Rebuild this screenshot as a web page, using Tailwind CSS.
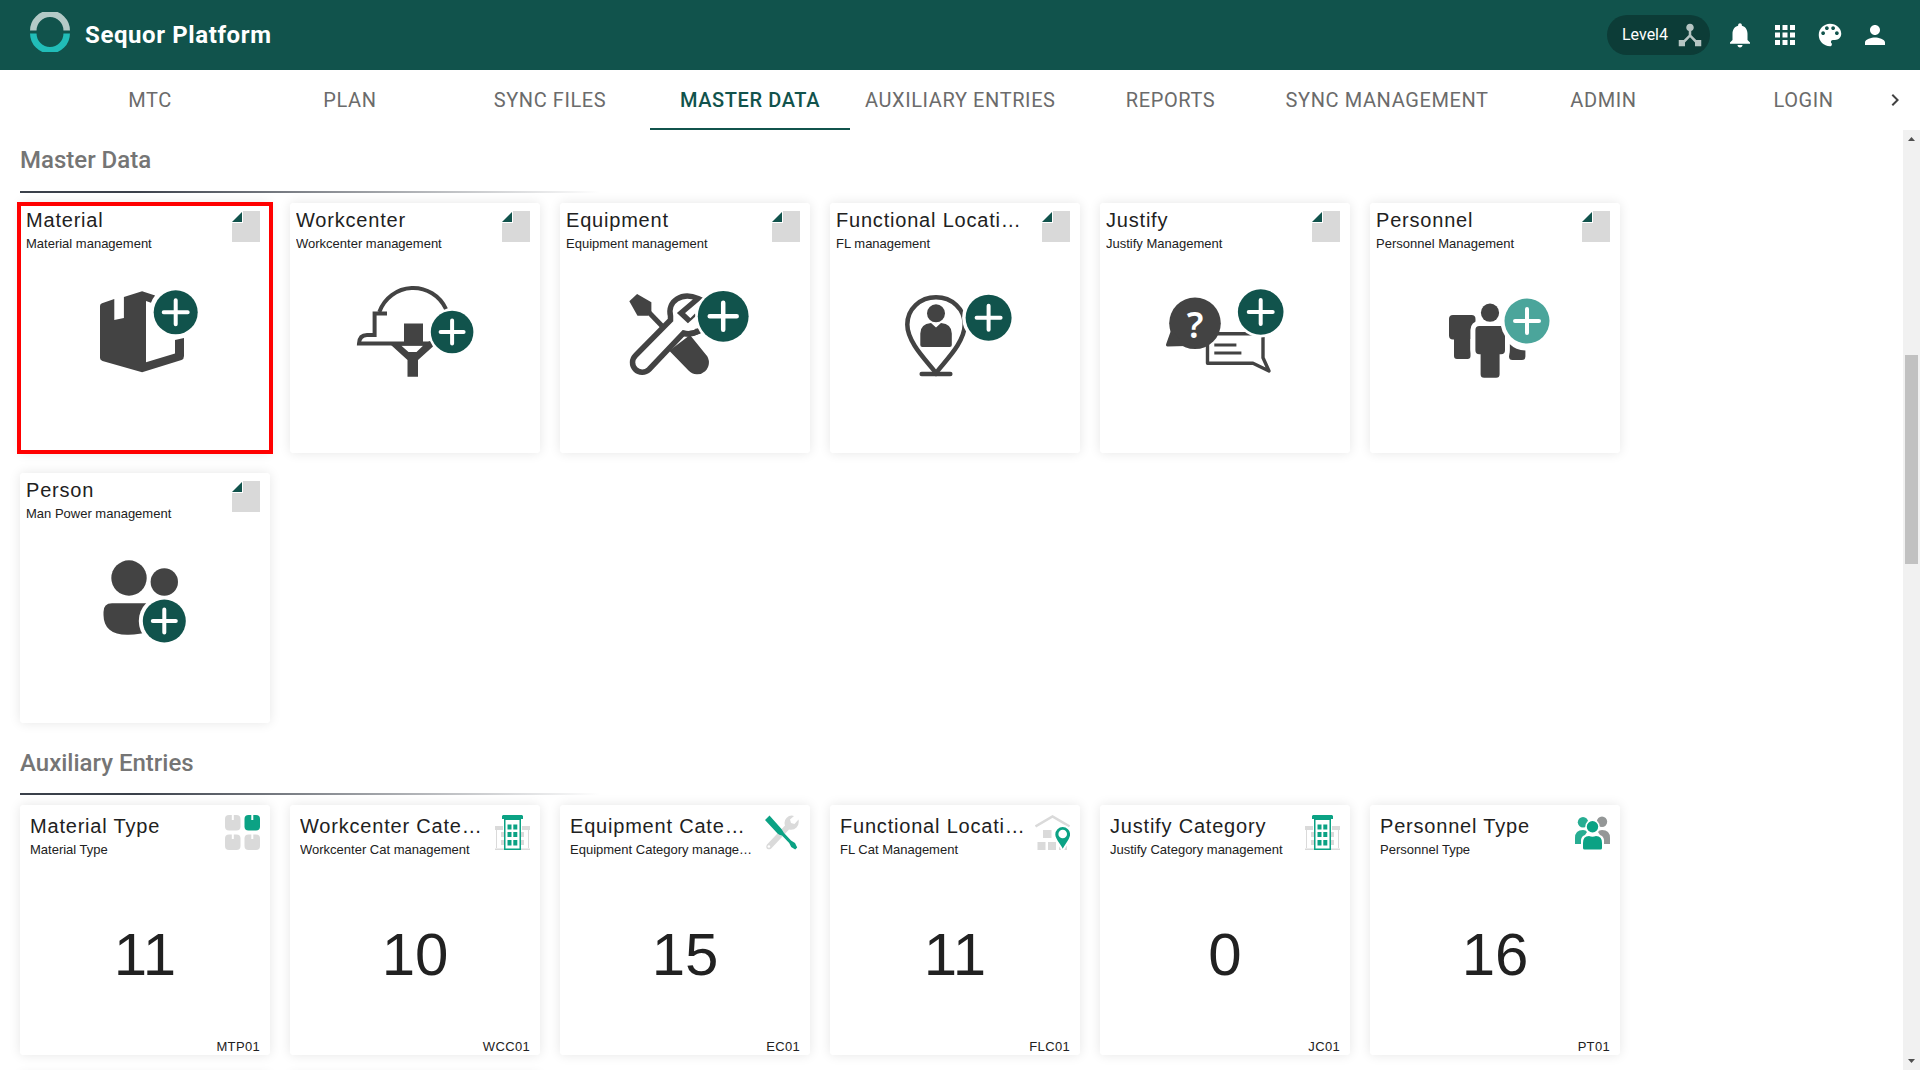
<!DOCTYPE html>
<html lang="en">
<head>
  <meta charset="UTF-8" />
  <meta name="viewport" content="width=device-width, initial-scale=1.0"/>
  <title>Sequor Platform</title>
  <script src="https://cdn.jsdelivr.net/npm/@tailwindcss/browser@4"></script>
</head>
<body class="h-screen flex flex-col overflow-hidden bg-white pb-[10px] font-['Liberation_Sans',Arial,sans-serif] text-[#212121]">

  <!-- Shared icons -->
  <svg class="hidden" aria-hidden="true">
    <symbol id="icon-doc" viewBox="0 0 28 31">
      <path fill="#d9d9d9" d="M11 0h17v31H0V12h11z"/>
      <path fill="#11534c" d="M10 1v10H0z"/>
    </symbol>
    <symbol id="icon-building" viewBox="0 0 35 35">
      <path fill="#dadada" d="M0 11h8v4H0zM27 11h8v4h-8zM1 15h1v18H1zM33 15h1v18h-1zM0 33.500h35V35H0zM6 17h4v5H6zM6 25h4v5H6zM25 17h4v5h-4zM25 25h4v5h-4z"/>
      <path fill="#fff" d="M10 4h16v31H10z"/>
      <path fill="#0ba284" fill-rule="evenodd" d="M8 0h19l1 1v3H7V1zM9 4h17v31H9zM10.500 5v28.500h14V5z"/>
      <path fill="#0ba284" d="M12.500 9.500h4v5h-4zM18.300 9.500h4v5h-4zM12.500 17h4v5h-4zM18.300 17h4v5h-4zM12.500 25h4v5.500h-4zM18.300 25h4v5.500h-4z"/>
    </symbol>
  </svg>

  <header class="flex h-[70px] shrink-0 items-center justify-between bg-[#11534c] px-[30px] font-[Roboto,sans-serif] text-white">
    <a href="#" class="flex items-center gap-[15px]">
      <svg class="mb-[6px] size-10" viewBox="0 0 40 40" fill="none" stroke-width="6.500" aria-hidden="true">
        <path stroke="#b4cac7" d="M3.300 18.500a16.700 16.700 0 0 1 33.400 0"/>
        <path stroke="#21bdb8" d="M3.300 21.500a16.700 16.700 0 0 0 33.400 0"/>
      </svg>
      <span class="text-2xl font-bold tracking-wide">Sequor Platform</span>
    </a>
    <div class="flex items-center gap-[15px]">
      <button type="button" class="flex h-10 items-center gap-[7px] rounded-full bg-[#0c3c37] pr-[5px] pl-[15px] text-base">
        Level4
        <svg class="size-[30px]" viewBox="0 0 24 24" fill="#b6c5c3" aria-hidden="true"><path d="M17 16l-4-4V8.820C14.160 8.400 15 7.300 15 6c0-1.660-1.340-3-3-3S9 4.340 9 6c0 1.300.840 2.400 2 2.820V12l-4 4H3v5h5v-3.050l4-4.200 4 4.200V21h5v-5h-4z"/></svg>
      </button>
      <button type="button" aria-label="Notifications">
        <svg class="size-[30px]" viewBox="0 0 24 24" fill="currentColor"><path d="M12 22c1.100 0 2-.900 2-2h-4c0 1.100.890 2 2 2zm6-6v-5c0-3.070-1.640-5.640-4.500-6.320V4c0-.830-.670-1.500-1.500-1.500s-1.500.670-1.500 1.500v.680C7.630 5.360 6 7.920 6 11v5l-2 2v1h16v-1l-2-2z"/></svg>
      </button>
      <button type="button" aria-label="Apps">
        <svg class="size-[30px]" viewBox="0 0 24 24" fill="currentColor"><path d="M4 8h4V4H4v4zm6 12h4v-4h-4v4zm-6 0h4v-4H4v4zm0-6h4v-4H4v4zm6 0h4v-4h-4v4zm6-10v4h4V4h-4zm-6 4h4V4h-4v4zm6 6h4v-4h-4v4zm0 6h4v-4h-4v4z"/></svg>
      </button>
      <button type="button" aria-label="Theme">
        <svg class="size-[30px]" viewBox="0 0 24 24" fill="currentColor"><path d="M12 3c-4.970 0-9 4.030-9 9s4.030 9 9 9c.830 0 1.500-.670 1.500-1.500 0-.390-.150-.740-.390-1.010-.230-.260-.380-.610-.380-.990 0-.830.670-1.500 1.500-1.500H16c2.760 0 5-2.240 5-5 0-4.420-4.030-8-9-8zm-5.500 9c-.830 0-1.500-.670-1.500-1.500S5.670 9 6.500 9 8 9.670 8 10.500 7.330 12 6.500 12zm3-4C8.670 8 8 7.330 8 6.500S8.670 5 9.500 5s1.500.670 1.500 1.500S10.330 8 9.500 8zm5 0c-.830 0-1.500-.670-1.500-1.500S13.670 5 14.500 5s1.500.670 1.500 1.500S15.330 8 14.500 8zm3 4c-.830 0-1.500-.670-1.500-1.500S16.670 9 17.500 9s1.500.670 1.500 1.500-.670 1.500-1.500 1.500z"/></svg>
      </button>
      <button type="button" aria-label="Account">
        <svg class="size-[30px]" viewBox="0 0 24 24" fill="currentColor"><path d="M12 12c2.210 0 4-1.790 4-4s-1.790-4-4-4-4 1.790-4 4 1.790 4 4 4zm0 2c-2.670 0-8 1.340-8 4v2h16v-2c0-2.660-5.330-4-8-4z"/></svg>
      </button>
    </div>
  </header>

  <nav class="flex h-[60px] shrink-0 pl-[50px] font-[Roboto,sans-serif] text-xl tracking-[0.03em] text-[#6b6b6b]">
    <div class="flex flex-1 overflow-hidden">
      <a href="#" class="flex min-w-[200px] items-center justify-center px-[15px]">MTC</a>
      <a href="#" class="flex min-w-[200px] items-center justify-center px-[15px]">PLAN</a>
      <a href="#" class="flex min-w-[200px] items-center justify-center px-[15px]">SYNC FILES</a>
      <a href="#" aria-current="page" class="flex min-w-[200px] items-center justify-center border-b-2 border-[#11534c] px-[15px] pt-[2px] font-medium text-[#11534c]">MASTER DATA</a>
      <a href="#" class="flex min-w-[200px] shrink-0 items-center justify-center px-[15px]">AUXILIARY ENTRIES</a>
      <a href="#" class="flex min-w-[200px] items-center justify-center px-[15px]">REPORTS</a>
      <a href="#" class="flex min-w-[200px] shrink-0 items-center justify-center px-[15px]">SYNC MANAGEMENT</a>
      <a href="#" class="flex min-w-[200px] items-center justify-center px-[15px]">ADMIN</a>
      <a href="#" class="flex min-w-[200px] items-center justify-center px-[15px]">LOGIN</a>
    </div>
    <button type="button" aria-label="Next tabs" class="flex w-[50px] items-center justify-center">
      <svg class="size-6" viewBox="0 0 24 24" fill="#424242"><path d="M10 6L8.590 7.410 13.170 12l-4.580 4.590L10 18l6-6z"/></svg>
    </button>
  </nav>

  <div class="flex min-h-0 flex-1">
    <main class="flex-1 overflow-hidden px-5">

      <!-- Master Data -->
      <section class="pt-[14px]">
        <h2 class="font-[Roboto,sans-serif] text-2xl font-medium text-[#757575]">Master Data</h2>
        <div class="mt-[15px] mb-[10px] h-[2px] max-w-[580px] bg-linear-to-r from-[#3a404a] from-20% to-transparent"></div>
        <div class="flex flex-wrap gap-5">

          <a href="#" class="relative block size-[250px] rounded-[3px] bg-white pt-[3px] pl-[6px] shadow-[0_0_12px_rgba(0,0,0,0.1)]">
            <span class="pointer-events-none absolute -inset-x-[3px] -inset-y-px border-4 border-[#ff0000]"></span>
            <div class="flex pr-[10px]">
              <div class="min-w-0 flex-1">
                <h3 class="truncate text-xl tracking-[0.04em]">Material</h3>
                <p class="truncate text-[13px] leading-5">Material management</p>
              </div>
              <svg class="mt-[5px] ml-[19px] h-[31px] w-7" aria-hidden="true"><use href="#icon-doc"/></svg>
            </div>
            <svg class="mx-auto mt-7 box-content h-[100px] w-[130px] pr-[6px]" viewBox="60 79 130 100" aria-hidden="true">
              <path fill="#434343" d="M80 103q0-2 2-2.800l12.300-4.200v21l9.600-2V94l18.200-5.700 13 4.200q-2.600 3-4.100 7.200l-5-1.700v61.300l29-8.800V137l9-2v18q0 3-2.500 4l-39.400 12.300L82.500 158q-2.500-1-2.500-3z"/>
              <circle cx="155.700" cy="109.300" r="22" fill="#11534c"/>
              <path stroke="#fff" stroke-width="4" stroke-linecap="round" d="M143.700 109.300h24M155.700 97.300v24"/>
            </svg>
          </a>

          <a href="#" class="block size-[250px] rounded-[3px] bg-white pt-[3px] pl-[6px] shadow-[0_0_12px_rgba(0,0,0,0.1)]">
            <div class="flex pr-[10px]">
              <div class="min-w-0 flex-1">
                <h3 class="truncate text-xl tracking-[0.04em]">Workcenter</h3>
                <p class="truncate text-[13px] leading-5">Workcenter management</p>
              </div>
              <svg class="mt-[5px] ml-[19px] h-[31px] w-7" aria-hidden="true"><use href="#icon-doc"/></svg>
            </div>
            <svg class="mx-auto mt-7 box-content h-[100px] w-[130px] pr-[6px]" viewBox="60 79 130 100" aria-hidden="true">
              <g fill="none" stroke="#434343" stroke-width="4">
                <path d="M89.300 109A36 36 0 0 1 156 106"/>
                <path d="M97 110.500H84.600V132H77q-7.500 0-8 8.500h71"/>
              </g>
              <path fill="#434343" d="M114 120.500h19V140h-19z"/>
              <path fill="#434343" fill-rule="evenodd" d="M101 142l9.500-1.500h24.500l5-2.500 3 5.500L128 157v16.700h-10.500V157zM111.400 142.700l7.100 6.300h8l6.500-6.300z"/>
              <circle cx="162.100" cy="129" r="21.300" fill="#11534c"/>
              <path stroke="#fff" stroke-width="4" stroke-linecap="round" d="M150.600 129h23M162.100 117.500v23"/>
            </svg>
          </a>

          <a href="#" class="block size-[250px] rounded-[3px] bg-white pt-[3px] pl-[6px] shadow-[0_0_12px_rgba(0,0,0,0.1)]">
            <div class="flex pr-[10px]">
              <div class="min-w-0 flex-1">
                <h3 class="truncate text-xl tracking-[0.04em]">Equipment</h3>
                <p class="truncate text-[13px] leading-5">Equipment management</p>
              </div>
              <svg class="mt-[5px] ml-[19px] h-[31px] w-7" aria-hidden="true"><use href="#icon-doc"/></svg>
            </div>
            <svg class="mx-auto mt-7 box-content h-[100px] w-[130px] pr-[6px]" viewBox="60 79 130 100" aria-hidden="true">
              <path fill="#434343" d="M69.300 98.300L77.100 91l14.300 8.300v9.700l-3.500 3.700H77.500z"/>
              <path stroke="#434343" stroke-width="5" d="M89 109.500l14 14.500"/>
              <path fill="#434343" d="M109.300 147.700L130 132l15.800 19.500a11.500 11.500 0 0 1-17.300 16z"/>
              <path fill="#fff" stroke="#434343" stroke-width="5.500" d="M138 95.500C122 88.500 107 98 110.500 113v4L75.500 152.500A9.500 9.500 0 0 0 89 166.500L123.500 130q7 2 15.500-2l-5-12.500-3.500 3.500-9.500-9z"/>
              <path fill="#fff" d="M136 113l12-3v14l-14 2-13 .500z"/>
              <path fill="none" stroke="#434343" stroke-width="5.500" d="M122.500 130.300q8 2 16.500-2.300"/>
              <circle cx="163.200" cy="113.300" r="28" fill="#fff"/>
              <circle cx="163.200" cy="113.300" r="25.400" fill="#11534c"/>
              <path stroke="#fff" stroke-width="4.500" stroke-linecap="round" d="M149.700 113.300h27M163.200 99.800v27"/>
            </svg>
          </a>

          <a href="#" class="block size-[250px] rounded-[3px] bg-white pt-[3px] pl-[6px] shadow-[0_0_12px_rgba(0,0,0,0.1)]">
            <div class="flex pr-[10px]">
              <div class="min-w-0 flex-1">
                <h3 class="truncate text-xl tracking-[0.04em]">Functional Location</h3>
                <p class="truncate text-[13px] leading-5">FL management</p>
              </div>
              <svg class="mt-[5px] ml-[19px] h-[31px] w-7" aria-hidden="true"><use href="#icon-doc"/></svg>
            </div>
            <svg class="mx-auto mt-7 box-content h-[100px] w-[130px] pr-[6px]" viewBox="60 79 130 100" aria-hidden="true">
              <path fill="none" stroke="#434343" stroke-width="4.500" d="M106 170c-8-11-28.700-30-28.700-48.500C77.300 106 90 94.200 106 94.200s28.700 11.800 28.700 27.300C134.700 140 114 159 106 170z"/>
              <path stroke="#434343" stroke-width="4.500" stroke-linecap="round" d="M91.700 171h28.600"/>
              <circle cx="106" cy="110.300" r="9" fill="#434343"/>
              <path fill="#434343" d="M101 120l5 4.500 5-4.500q10.800 1 10.800 10.500V142q0 2-2 2H92.300q-2 0-2-2v-11.500Q90.300 121 101 120z"/>
              <circle cx="158.600" cy="114.700" r="26.500" fill="#fff"/>
              <circle cx="158.600" cy="114.700" r="23" fill="#11534c"/>
              <path stroke="#fff" stroke-width="4" stroke-linecap="round" d="M146.600 114.700h24M158.600 102.700v24"/>
            </svg>
          </a>

          <a href="#" class="block size-[250px] rounded-[3px] bg-white pt-[3px] pl-[6px] shadow-[0_0_12px_rgba(0,0,0,0.1)]">
            <div class="flex pr-[10px]">
              <div class="min-w-0 flex-1">
                <h3 class="truncate text-xl tracking-[0.04em]">Justify</h3>
                <p class="truncate text-[13px] leading-5">Justify Management</p>
              </div>
              <svg class="mt-[5px] ml-[19px] h-[31px] w-7" aria-hidden="true"><use href="#icon-doc"/></svg>
            </div>
            <svg class="mx-auto mt-7 box-content h-[100px] w-[130px] pr-[6px]" viewBox="60 79 130 100">
              <path fill="none" stroke="#434343" stroke-width="3.400" stroke-linejoin="round" d="M107.500 138v22.300H153l16 7.700-6-13.300V130.700h-50"/>
              <path stroke="#434343" stroke-width="3" d="M114.300 142h22.100M114.300 150h27.100"/>
              <circle cx="95" cy="120.300" r="25.800" fill="#434343"/>
              <path fill="#434343" d="M69.800 125l1 3L66 141.500q-.300 2 1.500 2L86 143z"/>
              <text x="95" y="135" text-anchor="middle" fill="#fff" class="font-['Noto_Sans',sans-serif] text-4xl font-semibold">?</text>
              <circle cx="160.700" cy="109" r="25.500" fill="#fff"/>
              <circle cx="160.700" cy="109" r="22.800" fill="#11534c"/>
              <path stroke="#fff" stroke-width="4" stroke-linecap="round" d="M148.700 109h24M160.700 97v24"/>
            </svg>
          </a>

          <a href="#" class="block size-[250px] rounded-[3px] bg-white pt-[3px] pl-[6px] shadow-[0_0_12px_rgba(0,0,0,0.1)]">
            <div class="flex pr-[10px]">
              <div class="min-w-0 flex-1">
                <h3 class="truncate text-xl tracking-[0.04em]">Personnel</h3>
                <p class="truncate text-[13px] leading-5">Personnel Management</p>
              </div>
              <svg class="mt-[5px] ml-[19px] h-[31px] w-7" aria-hidden="true"><use href="#icon-doc"/></svg>
            </div>
            <svg class="mx-auto mt-7 box-content h-[100px] w-[130px] pr-[6px]" viewBox="60 79 130 100" aria-hidden="true">
              <g fill="#434343">
                <path d="M83 112h18.500q4 0 4 4v20h-5v17q0 3-3 3H87q-3 0-3-3v-16.500h-1q-4 0-4-4V116q0-4 4-4z"/>
                <path d="M139.600 141q6 6 15.800 6.500v6q0 3.500-3.500 3.500h-9.400q-3.500 0-3.500-3.500l.600-4z"/>
                <path stroke="#fff" stroke-width="10" d="M109.400 123h21.200q4 0 4 4v20q0 4-4 4h-1v20q0 3.500-3.500 3.500h-12q-3.500 0-3.500-3.500v-20h-1.200q-4 0-4-4v-20q0-4 4-4z"/>
                <path d="M109.400 123h21.600q4 0 4 4v20.300q0 4-4 4h-1.400v20q0 3.500-3.500 3.500h-12q-3.500 0-3.500-3.500v-20h-1.200q-4 0-4-4V127q0-4 4-4z"/>
                <circle cx="120" cy="109.700" r="9.100"/>
              </g>
              <circle cx="157" cy="118" r="26.500" fill="#fff"/>
              <circle cx="157" cy="118" r="22.500" fill="#4ba59b"/>
              <path stroke="#fff" stroke-width="4" stroke-linecap="round" d="M145 118h24M157 106v24"/>
            </svg>
          </a>

          <a href="#" class="block size-[250px] rounded-[3px] bg-white pt-[3px] pl-[6px] shadow-[0_0_12px_rgba(0,0,0,0.1)]">
            <div class="flex pr-[10px]">
              <div class="min-w-0 flex-1">
                <h3 class="truncate text-xl tracking-[0.04em]">Person</h3>
                <p class="truncate text-[13px] leading-5">Man Power management</p>
              </div>
              <svg class="mt-[5px] ml-[19px] h-[31px] w-7" aria-hidden="true"><use href="#icon-doc"/></svg>
            </div>
            <svg class="mx-auto mt-7 box-content h-[100px] w-[130px] pr-[6px]" viewBox="60 79 130 100" aria-hidden="true">
              <g fill="#434343">
                <circle cx="109" cy="105" r="17.700"/>
                <path d="M92 130.300h40V158q-14 4-25 3.700c-15 0-23.500-6.700-23.500-19.700v-3q0-8.700 8.500-8.700z"/>
              </g>
              <circle cx="144.300" cy="148" r="25.500" fill="#fff"/>
              <circle cx="144.300" cy="109" r="13.700" fill="#434343"/>
              <circle cx="144.300" cy="148" r="21.500" fill="#11534c"/>
              <path stroke="#fff" stroke-width="4" stroke-linecap="round" d="M132.800 148h23M144.300 136.500v23"/>
            </svg>
          </a>
        </div>
      </section>

      <!-- Auxiliary Entries -->
      <section class="pt-6">
        <h2 class="font-[Roboto,sans-serif] text-2xl font-medium text-[#757575]">Auxiliary Entries</h2>
        <div class="mt-[14px] mb-[10px] h-[2px] max-w-[580px] bg-linear-to-r from-[#3a404a] from-20% to-transparent"></div>
        <div class="flex flex-wrap gap-5">

          <a href="#" class="flex size-[250px] flex-col rounded-[3px] bg-white px-[10px] pt-[7px] shadow-[0_0_12px_rgba(0,0,0,0.1)]">
            <div class="flex">
              <div class="min-w-0 flex-1">
                <h3 class="truncate text-xl tracking-[0.04em]">Material Type</h3>
                <p class="truncate text-[13px] leading-5">Material Type</p>
              </div>
              <svg class="mt-[3px] ml-[9px] size-[35px]" viewBox="0 0 35 35" fill="#dadada" aria-hidden="true">
                <rect width="15.500" height="15.500" rx="4"/>
                <rect x="19.500" width="15.500" height="15.500" rx="4" fill="#0ba284"/>
                <rect y="19.500" width="15.500" height="15.500" rx="4"/>
                <rect x="19.500" y="19.500" width="15.500" height="15.500" rx="4"/>
                <path stroke="#fff" stroke-width="2" d="M7.800 0v5M27.300 0v5M7.800 19v5M27.300 19v5"/>
              </svg>
            </div>
            <p class="flex flex-1 items-center justify-center pt-[10px] text-6xl">11</p>
            <p class="text-right text-[13px] leading-4 tracking-wide">MTP01</p>
          </a>

          <a href="#" class="flex size-[250px] flex-col rounded-[3px] bg-white px-[10px] pt-[7px] shadow-[0_0_12px_rgba(0,0,0,0.1)]">
            <div class="flex">
              <div class="min-w-0 flex-1">
                <h3 class="truncate text-xl tracking-[0.04em]">Workcenter Category</h3>
                <p class="truncate text-[13px] leading-5">Workcenter Cat management</p>
              </div>
              <svg class="mt-[3px] ml-[9px] size-[35px]" aria-hidden="true"><use href="#icon-building"/></svg>
            </div>
            <p class="flex flex-1 items-center justify-center pt-[10px] text-6xl">10</p>
            <p class="text-right text-[13px] leading-4 tracking-wide">WCC01</p>
          </a>

          <a href="#" class="flex size-[250px] flex-col rounded-[3px] bg-white px-[10px] pt-[7px] shadow-[0_0_12px_rgba(0,0,0,0.1)]">
            <div class="flex">
              <div class="min-w-0 flex-1">
                <h3 class="truncate text-xl tracking-[0.04em]">Equipment Category</h3>
                <p class="truncate text-[13px] leading-5">Equipment Category management</p>
              </div>
              <svg class="mt-[3px] ml-[9px] size-[35px]" viewBox="0 0 35 35" aria-hidden="true">
                <path fill="#dadada" d="M29 1q-4-1.500-7.500 2-3 3-1.500 7.500L2 29.500q-1.500 2.500 0 4.200 2 1.300 4 0L24 14.500q4.500 1 7.500-2 3-3.500 2-8L29.500 9 26 8l-1-3.500z"/>
                <circle cx="3.900" cy="31.500" r="1.300" fill="#fff"/>
                <path fill="#0ba284" d="M0 5l4.500-4.500L16.500 14q1.500 2.500 2.500 4l7 7.500 4 2.500 2.200 4.500-2 2-4-2.500-2-4-7.200-7.500q-3-.500-4.500-2z"/>
              </svg>
            </div>
            <p class="flex flex-1 items-center justify-center pt-[10px] text-6xl">15</p>
            <p class="text-right text-[13px] leading-4 tracking-wide">EC01</p>
          </a>

          <a href="#" class="flex size-[250px] flex-col rounded-[3px] bg-white px-[10px] pt-[7px] shadow-[0_0_12px_rgba(0,0,0,0.1)]">
            <div class="flex">
              <div class="min-w-0 flex-1">
                <h3 class="truncate text-xl tracking-[0.04em]">Functional Location</h3>
                <p class="truncate text-[13px] leading-5">FL Cat Management</p>
              </div>
              <svg class="mt-[3px] ml-[9px] size-[35px]" viewBox="0 0 35 35" aria-hidden="true">
                <path fill="none" stroke="#dadada" stroke-width="2.500" d="M.500 11.500l17-10 17 10"/>
                <path fill="#dadada" d="M8 15h8.500v8H8zM19 15h8v8h-8zM2.500 27h8v8h-8zM13 27h8v8h-8zM24 27h8v8h-8z"/>
                <path fill="#0ba284" stroke="#fff" stroke-width="2" d="M27.700 36C25.500 30 19.300 25 19.300 19.500a8.400 8.400 0 0 1 16.800 0C36 25 30 30 27.700 36z"/>
                <circle cx="27.700" cy="19" r="4.300" fill="#fff"/>
              </svg>
            </div>
            <p class="flex flex-1 items-center justify-center pt-[10px] text-6xl">11</p>
            <p class="text-right text-[13px] leading-4 tracking-wide">FLC01</p>
          </a>

          <a href="#" class="flex size-[250px] flex-col rounded-[3px] bg-white px-[10px] pt-[7px] shadow-[0_0_12px_rgba(0,0,0,0.1)]">
            <div class="flex">
              <div class="min-w-0 flex-1">
                <h3 class="truncate text-xl tracking-[0.04em]">Justify Category</h3>
                <p class="truncate text-[13px] leading-5">Justify Category management</p>
              </div>
              <svg class="mt-[3px] ml-[9px] size-[35px]" aria-hidden="true"><use href="#icon-building"/></svg>
            </div>
            <p class="flex flex-1 items-center justify-center pt-[10px] text-6xl">0</p>
            <p class="text-right text-[13px] leading-4 tracking-wide">JC01</p>
          </a>

          <a href="#" class="flex size-[250px] flex-col rounded-[3px] bg-white px-[10px] pt-[7px] shadow-[0_0_12px_rgba(0,0,0,0.1)]">
            <div class="flex">
              <div class="min-w-0 flex-1">
                <h3 class="truncate text-xl tracking-[0.04em]">Personnel Type</h3>
                <p class="truncate text-[13px] leading-5">Personnel Type</p>
              </div>
              <svg class="mt-[3px] ml-[9px] size-[35px]" viewBox="0 0 35 35" aria-hidden="true">
                <circle cx="8" cy="7.300" r="5.200" fill="#27ad92"/>
                <path fill="#27ad92" d="M0 29v-6q0-8 8-8 3 0 4 2l-2 3q-3.500 1-4 5v4z"/>
                <circle cx="27" cy="6.800" r="5.200" fill="#949797"/>
                <path fill="#949797" d="M35 29v-6q0-8-8-8-3 0-4 2l2 3q3.500 1 4 5v4z"/>
                <circle cx="17.500" cy="11.700" r="7.200" fill="#fff"/>
                <circle cx="17.500" cy="11.700" r="5.700" fill="#0ba284"/>
                <path fill="#0ba284" d="M8 28q0-7 6-7 3.500 1.300 7 0 6 0 6 7v5q0 1.500-1.500 1.500h-16Q8 34.500 8 33z"/>
              </svg>
            </div>
            <p class="flex flex-1 items-center justify-center pt-[10px] text-6xl">16</p>
            <p class="text-right text-[13px] leading-4 tracking-wide">PT01</p>
          </a>

          <div class="size-[250px] rounded-[3px] bg-white shadow-[0_0_12px_rgba(0,0,0,0.1)]"></div>
          <div class="size-[250px] rounded-[3px] bg-white shadow-[0_0_12px_rgba(0,0,0,0.1)]"></div>
        </div>
      </section>
    </main>

    <!-- Scrollbar -->
    <div class="flex w-[17px] flex-col items-center bg-[#f1f1f1]" aria-hidden="true">
      <svg class="size-[17px]" viewBox="0 0 17 17" fill="#505050"><path d="M5 11l3.500-4 3.500 4z"/></svg>
      <div class="flex w-full flex-1 flex-col px-[2px]">
        <div class="basis-[23%]"></div>
        <div class="basis-[23%] bg-[#c1c1c1]"></div>
      </div>
      <svg class="size-[17px]" viewBox="0 0 17 17" fill="#505050"><path d="M5 6l3.500 4L12 6z"/></svg>
    </div>
  </div>
</body>
</html>
